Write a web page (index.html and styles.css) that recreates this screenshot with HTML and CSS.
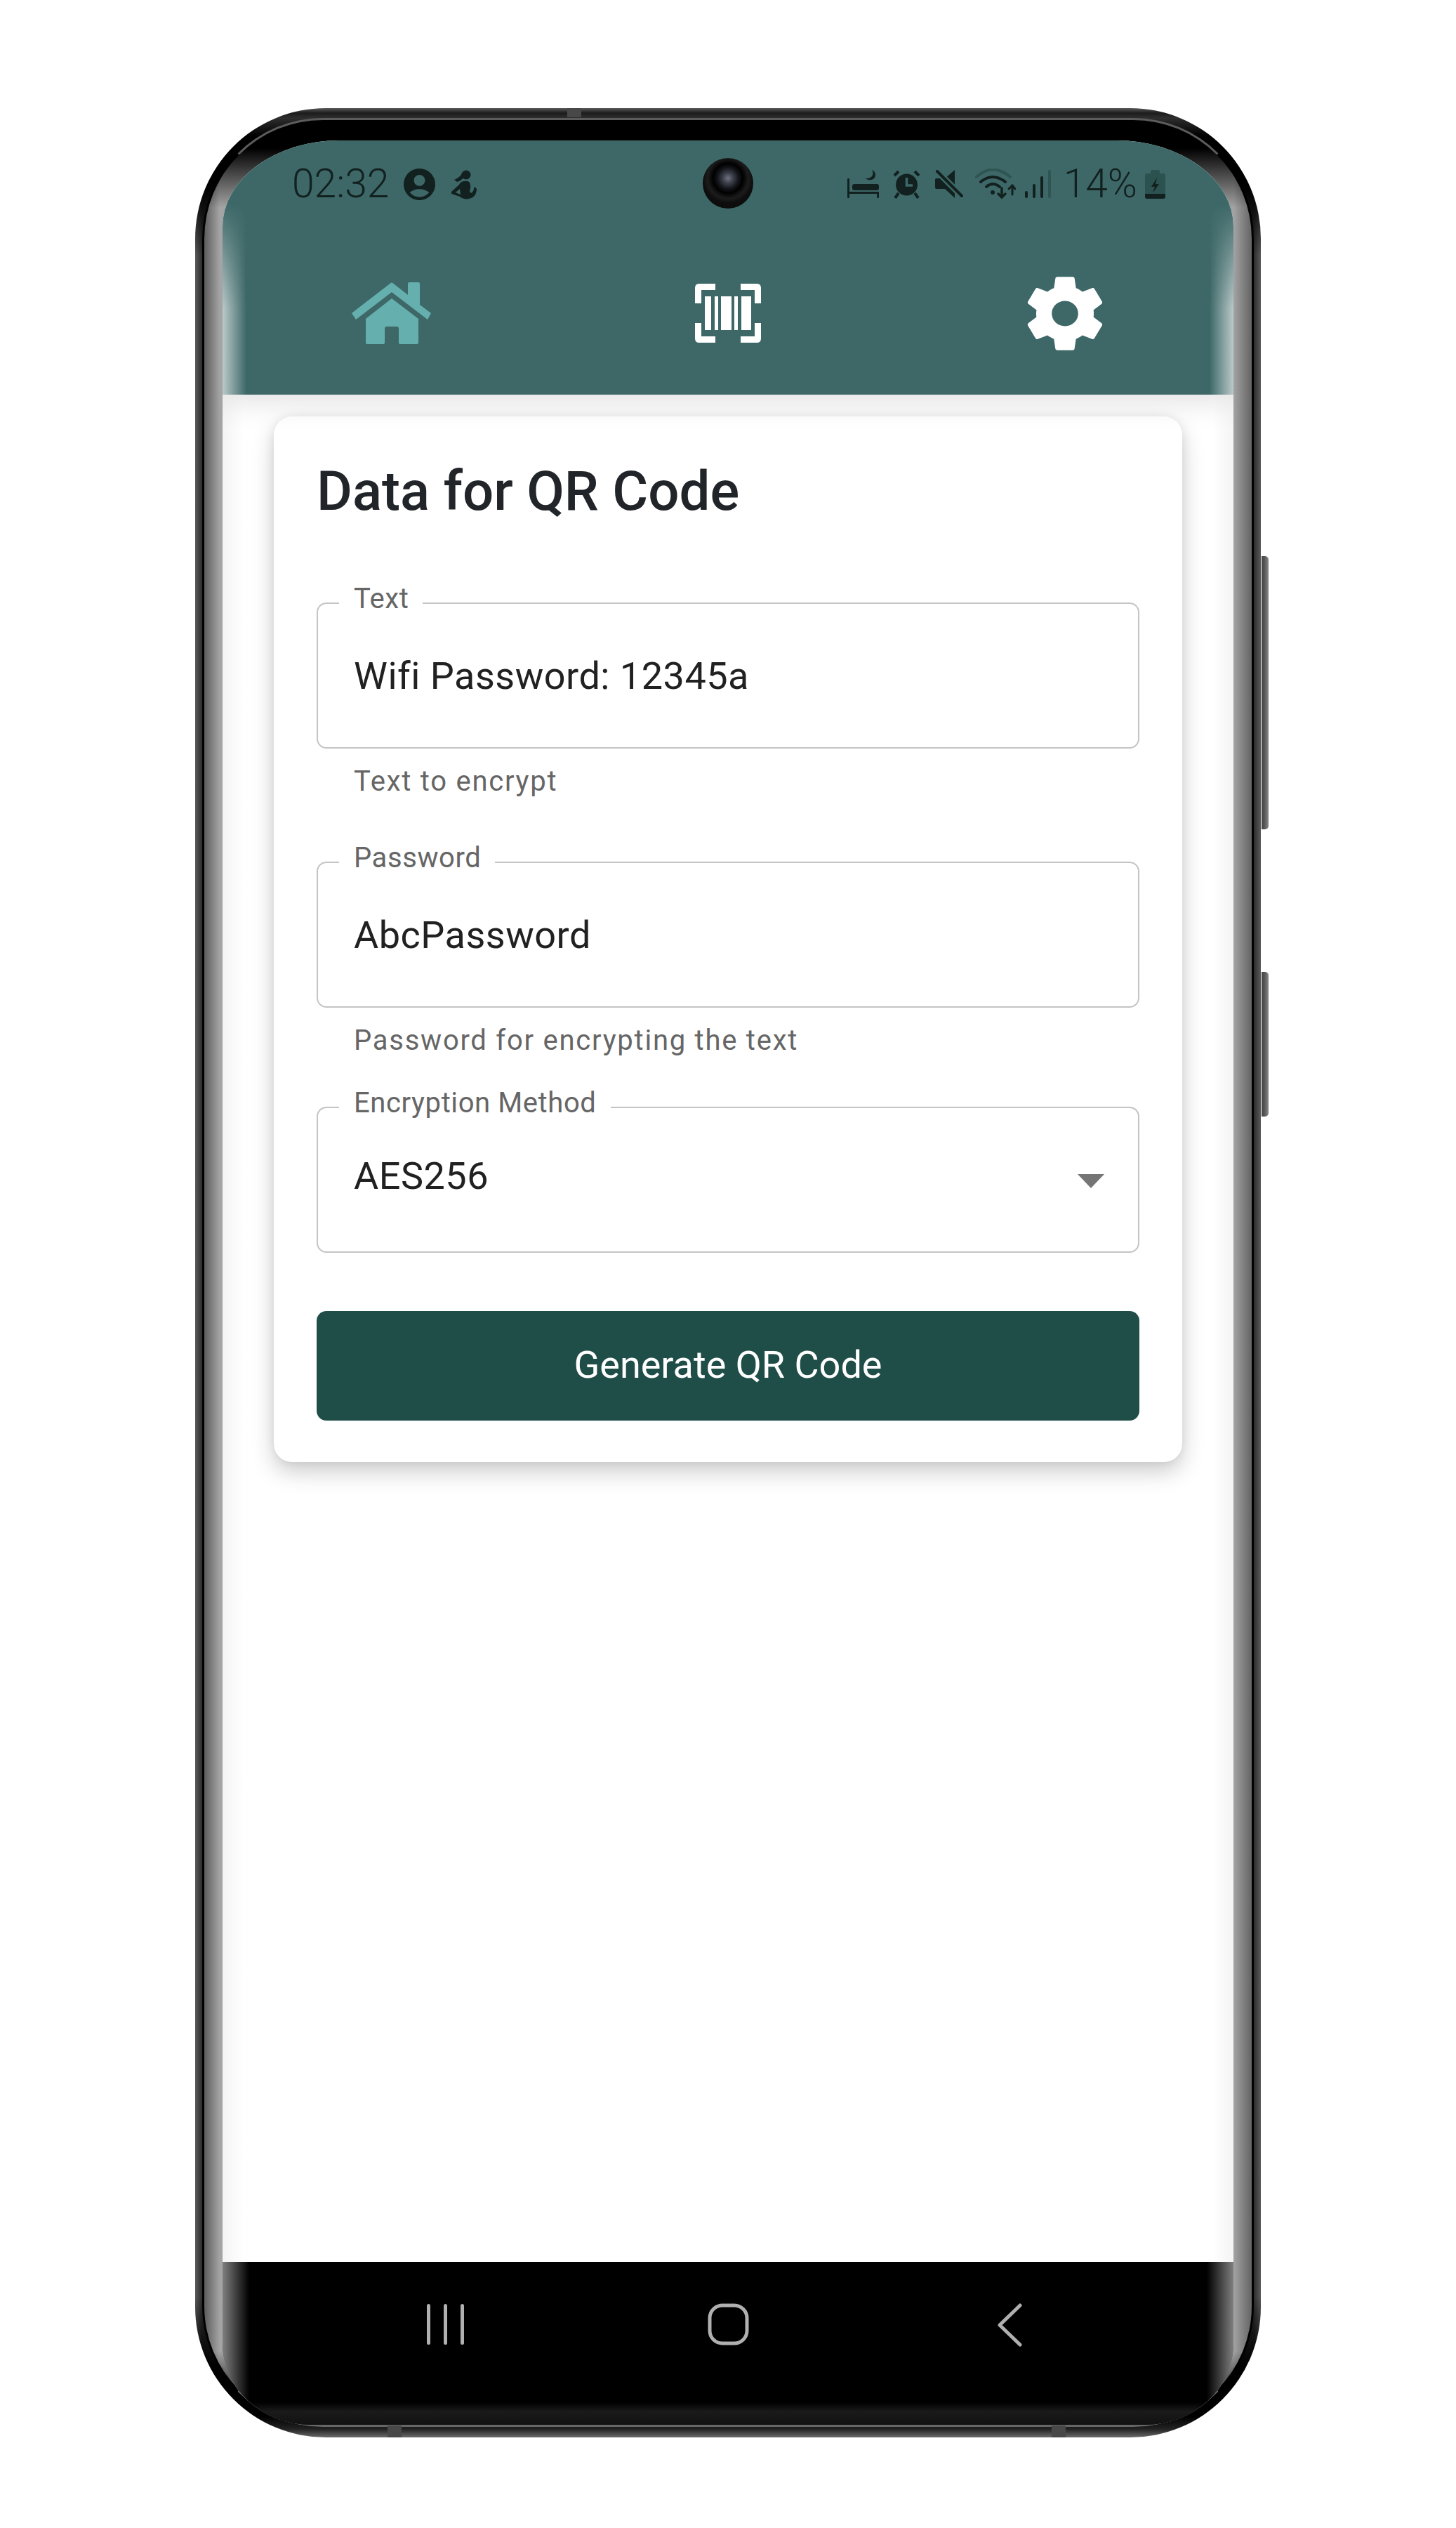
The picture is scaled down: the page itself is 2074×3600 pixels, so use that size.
FILE: index.html
```html
<!DOCTYPE html>
<html>
<head>
	<title>Data for QR Code</title>
	<meta charset="utf-8">
	<link rel="stylesheet" href="styles.css">
</head>

<body>
	<div class="phone">
		<div class="side-btn power"></div>
		<div class="side-btn volume"></div>
		<div class="notch notch-top"></div>
		<div class="notch notch-bottom-left"></div>
		<div class="notch notch-bottom-right"></div>

		<div class="bezel">
			<div class="screen">
				<div class="camera"></div>

				<header class="appbar">
					<div class="statusbar">
						<div class="status-left">
							<span class="status-text">02:32</span>
							<svg class="ic-profile" width="45" height="45" viewBox="2 2 20 20"><path fill="#12211f" d="M12 2C6.48 2 2 6.48 2 12s4.48 10 10 10 10-4.48 10-10S17.52 2 12 2zm0 4c1.93 0 3.5 1.57 3.5 3.5S13.93 13 12 13s-3.5-1.57-3.5-3.5S10.07 6 12 6zm0 14c-2.03 0-4.43-.82-6.14-2.88C7.55 15.8 9.68 15 12 15s4.45.8 6.14 2.12C16.43 19.18 14.03 20 12 20z"/></svg>
							<svg class="ic-run" width="37" height="43" viewBox="8 5 37 43">
								<circle cx="30" cy="13" r="6.5" fill="#12211f"/>
								<path fill="#12211f" d="M24 11C22 15 18 18 13 20L17 23C21 22 25 19 26 17Z"/>
								<path fill="#12211f" fill-rule="evenodd" d="M22 24C26 21 33 21 35 24C37 28 36 33 35 36C36 40 38 40 41 34C41 32 41 31 42 30L45 33C45 39 42 46 34 47C30 48 24 47 21 44L9 40V37L20 27ZM21 33L15 38L22 41Z"/>
							</svg>
						</div>
						<div class="status-right">
							<svg width="45" height="41" viewBox="1210 243 45 41" fill="#12211f">
								<rect x="1210" y="255" width="3" height="28" rx="1"/>
								<rect x="1217" y="263" width="38" height="9" rx="3"/>
								<rect x="1213" y="274" width="42" height="3"/>
								<rect x="1252" y="274" width="3" height="9" rx="1"/>
								<path d="M1245 243C1249 250 1244 256 1236 255C1240 259 1250 258 1250 250C1250 247 1248 244 1245 243Z"/>
							</svg>
							<svg class="ic-alarm" width="39" height="41" viewBox="0 0 39 41">
								<circle cx="19.5" cy="21" r="15.5" fill="#12211f"/>
								<path d="M19.5 11V22H28" fill="none" stroke="#3e6868" stroke-width="3.5"/>
								<path d="M2 8L8 2M31 2L37 8M8 33L3 40M31 33L36 40" stroke="#12211f" stroke-width="4" fill="none"/>
							</svg>
							<svg class="ic-mute" width="40" height="41" viewBox="1335 243 40 41">
								<path fill="#12211f" d="M1363 243V283L1349 270H1337Q1335 270 1335 268V257Q1335 255 1337 255H1349Z"/>
								<path d="M1334 241L1376 283" stroke="#3e6868" stroke-width="9"/>
								<path d="M1338 245L1373 280" stroke="#12211f" stroke-width="4" stroke-linecap="round"/>
							</svg>
							<svg class="ic-wifi" width="58" height="44" viewBox="1392 240 58 44" fill="none" stroke-width="4" stroke-linecap="round">
								<path d="M1394 252Q1417 231 1442 252" stroke="#2f5553"/>
								<path d="M1400 259Q1417 245 1435 259" stroke="#12211f"/>
								<path d="M1408 266Q1417 258 1427 266" stroke="#12211f"/>
								<circle cx="1417" cy="274" r="3" fill="#12211f" stroke="none"/>
								<path d="M1430 268V281M1425 276L1430 281L1435 276" stroke="#12211f" stroke-width="3.5"/>
								<path d="M1445 265V277M1440 269L1445 264L1449 269" stroke="#12211f" stroke-width="3"/>
							</svg>
							<svg class="ic-signal" width="37" height="40" viewBox="1463 243 37 40">
								<rect x="1463" y="273" width="4" height="10" rx="2" fill="#12211f"/>
								<rect x="1474" y="263" width="4" height="20" rx="2" fill="#12211f"/>
								<rect x="1485" y="252" width="4" height="31" rx="2" fill="#12211f"/>
								<rect x="1496" y="243" width="4" height="40" rx="2" fill="#2f5553"/>
							</svg>
							<span class="status-text pct">14%</span>
							<svg class="ic-battery" width="29" height="41" viewBox="1631 242 29 41">
								<rect x="1639" y="242" width="13" height="8" rx="2" fill="#2c5250"/>
								<rect x="1631" y="247" width="29" height="36" rx="3" fill="#2c5250"/>
								<path d="M1631 276H1660V280Q1660 283 1657 283H1634Q1631 283 1631 280Z" fill="#12211f"/>
								<path d="M1648 253L1640 266H1645L1642 275L1651 262H1646Z" fill="#12211f"/>
							</svg>
						</div>
					</div>

					<nav class="tabs">
						<div class="tab">
							<svg width="113" height="88" viewBox="0 0 113 88"><path fill="#66afaf" d="M55 1.5Q57 -.5 59 1.5L80 18V2Q80 0 82 0H95Q97 0 97 2V32L113 44L108 53L57 14L6 53L0 44Z"/><path fill="#66afaf" d="M57 23L95 52V86Q95 88 93 88H69Q67 88 67 86V66Q67 63 64 63H50Q47 63 47 66V86Q47 88 45 88H22Q20 88 20 86V52Z"/></svg>
						</div>
						<div class="tab">
							<svg width="94" height="84" viewBox="0 0 94 84" fill="#fff">
								<path d="M0 28V6Q0 0 6 0H29V9H9V28Z"/>
								<path d="M94 28V6Q94 0 88 0H65V9H85V28Z"/>
								<path d="M0 56V78Q0 84 6 84H29V75H9V56Z"/>
								<path d="M94 56V78Q94 84 88 84H65V75H85V56Z"/>
								<rect x="14" y="18" width="9" height="48"/>
								<rect x="28" y="18" width="5" height="48"/>
								<rect x="37" y="18" width="15" height="48"/>
								<rect x="56" y="18" width="5" height="48"/>
								<rect x="66" y="18" width="14" height="48"/>
							</svg>
						</div>
						<div class="tab">
							<svg width="106" height="109" viewBox="2.7 2 18.6 20" preserveAspectRatio="none"><path fill="#fff" d="M19.14 12.94c.04-.3.06-.61.06-.94 0-.32-.02-.64-.07-.94l2.03-1.58c.18-.14.23-.41.12-.61l-1.92-3.32c-.12-.22-.37-.29-.59-.22l-2.39.96c-.5-.38-1.03-.7-1.62-.94l-.36-2.54c-.04-.24-.24-.41-.48-.41h-3.84c-.24 0-.43.17-.47.41l-.36 2.54c-.59.24-1.13.57-1.62.94l-2.39-.96c-.22-.08-.47 0-.59.22L2.74 8.87c-.12.21-.08.47.12.61l2.03 1.58c-.05.3-.09.63-.09.94s.02.64.07.94l-2.03 1.58c-.18.14-.23.41-.12.61l1.92 3.32c.12.22.37.29.59.22l2.39-.96c.5.38 1.03.7 1.62.94l.36 2.54c.05.24.24.41.48.41h3.84c.24 0 .44-.17.47-.41l.36-2.54c.59-.24 1.13-.56 1.62-.94l2.39.96c.22.08.47 0 .59-.22l1.92-3.32c.12-.22.07-.47-.12-.61l-2.01-1.58zM12 15.3c-1.82 0-3.3-1.48-3.3-3.3s1.48-3.3 3.3-3.3 3.3 1.48 3.3 3.3-1.48 3.3-3.3 3.3z"/></svg>
						</div>
					</nav>
				</header>

				<main class="content">
					<section class="card">
						<h1 class="card-title">Data for QR Code</h1>

						<fieldset class="field">
							<legend>Text</legend>
							<div class="field-row">Wifi Password: 12345a</div>
						</fieldset>
						<p class="helper">Text to encrypt</p>

						<fieldset class="field field-next">
							<legend>Password</legend>
							<div class="field-row">AbcPassword</div>
						</fieldset>
						<p class="helper">Password for encrypting the text</p>

						<fieldset class="field field-select">
							<legend>Encryption Method</legend>
							<div class="field-row">
								<span>AES256</span>
								<span class="arrow"></span>
							</div>
						</fieldset>

						<button class="generate">Generate QR Code</button>
					</section>
				</main>

				<footer class="navbar">
					<svg width="54" height="60" viewBox="0 0 54 60" fill="#b0b0b0">
						<rect x="0" y="1" width="5" height="58" rx="2.5"/>
						<rect x="24" y="1" width="5" height="58" rx="2.5"/>
						<rect x="48" y="1" width="5" height="58" rx="2.5"/>
					</svg>
					<svg width="59" height="60" viewBox="0 0 59 60"><rect x="3" y="3" width="53" height="54" rx="18" fill="none" stroke="#b0b0b0" stroke-width="5"/></svg>
					<svg width="36" height="62" viewBox="0 0 36 62"><path d="M32 3L3 31L32 59" fill="none" stroke="#b0b0b0" stroke-width="5" stroke-linecap="round" stroke-linejoin="round"/></svg>
				</footer>
			</div>
		</div>
	</div>
</body>
</html>
```

FILE: styles.css
```css
body{
	margin: 0;
	height: 3600px;
	background: #fff;
	font-family: 'Roboto', sans-serif;
}

/* phone frame */
.phone{
	position: relative;
	box-sizing: border-box;
	width: 1518px;
	height: 3317px;
	margin: 154px 0 0 278px;
	padding: 14px 10px 15px;
	display: flex;
	border-radius: 186px;
	background:
		linear-gradient(to bottom, #5a5a5a, #1c1c1c 7px, #2e2e2e 14px, #000 40px, #000 110px, transparent 210px),
		linear-gradient(to top, #6a6a6a, #222 12px, #000 30px, #000 100px, transparent 200px),
		linear-gradient(to right, #5a5a5a, #2c2c2c 10px, #2c2c2c calc(100% - 10px), #5a5a5a);
}

.bezel{
	flex: 1;
	display: flex;
	box-sizing: border-box;
	padding: 29px 26px 0;
	border: 3px solid #000;
	border-top-color: #5c5c5c;
	border-bottom-color: #666;
	border-radius: 172px;
	background:
		linear-gradient(to bottom, #000 40px, transparent 125px),
		linear-gradient(to top, #0c0c0c 30px, transparent 105px),
		linear-gradient(to right, #5c5c5c, #a4a4a4 22px, #a4a4a4 calc(100% - 26px), #646464);
}

.screen{
	flex: 1;
	position: relative;
	display: flex;
	flex-direction: column;
	overflow: hidden;
	background: #fff;
	border-radius: 167px 167px 125px 125px / 123px 123px 115px 115px;
}

.side-btn{
	position: absolute;
	left: 1519px;
	width: 10px;
	border-radius: 0 5px 5px 0;
	background: linear-gradient(to right, #444, #555 40%, #888);
}

.power{
	top: 638px;
	height: 389px;
}

.volume{
	top: 1230px;
	height: 206px;
}

.notch{
	position: absolute;
	width: 20px;
	background: #484848;
}

.notch-top{
	top: 0;
	left: 530px;
	height: 13px;
}

.notch-bottom-left{
	bottom: 0;
	left: 274px;
	height: 17px;
}

.notch-bottom-right{
	bottom: 0;
	left: 1220px;
	height: 17px;
}

.camera{
	position: absolute;
	z-index: 3;
	top: 25px;
	left: 684px;
	width: 72px;
	height: 72px;
	border-radius: 50%;
	background: radial-gradient(circle at 50% 40%, #6f7480 0, #3e424c 7px, #13151a 15px, #000 21px, #1c1c1c 29px, #0d0d0d 36px);
}

/* app bar */
.appbar{
	position: relative;
	z-index: 2;
	box-sizing: border-box;
	height: 362px;
	padding-top: 40px;
	background: #3e6868;
	box-shadow: 0 10px 40px rgba(0,0,0,.12);
}

/* glass edge where the screen curves over */
.appbar::before{
	content: "";
	position: absolute;
	inset: 0;
	background: linear-gradient(to right, rgba(255,255,255,.65), rgba(255,255,255,0) 34px, rgba(255,255,255,0) calc(100% - 34px), rgba(255,255,255,.65));
	-webkit-mask-image: linear-gradient(to bottom, transparent 90px, #000 240px);
	mask-image: linear-gradient(to bottom, transparent 90px, #000 240px);
}

.statusbar{
	position: relative;
	display: flex;
	justify-content: space-between;
	height: 44px;
	padding: 0 97px 0 99px;
	align-items: center;
}

.status-left, .status-right{
	display: flex;
	align-items: center;
}

.status-text{
	font-size: 57px;
	font-weight: 300;
	line-height: 44px;
	color: #12211f;
}

.ic-profile{
	margin-left: 21px;
}

.ic-run{
	margin-left: 22px;
}

.ic-alarm{
	margin-left: 20px;
}

.ic-mute{
	margin-left: 21px;
}

.ic-wifi{
	margin-left: 17px;
}

.ic-signal{
	margin-left: 13px;
}

.pct{
	margin-left: 18px;
}

.ic-battery{
	margin-left: 11px;
}

.tabs{
	position: relative;
	display: grid;
	grid-template-columns: repeat(3, 480px);
	height: 232px;
	margin-top: 46px;
}

.tab{
	display: flex;
	align-items: center;
	justify-content: center;
}

/* main content */
.content{
	flex: 1;
	padding: 31px 73px 0;
	background: linear-gradient(to right, #f4f4f4, #fff 30px, #fff calc(100% - 30px), #f4f4f4);
}

.card{
	box-sizing: border-box;
	height: 1489px;
	padding: 65px 61px 60px;
	background: #fff;
	border-radius: 26px;
	box-shadow: 0 14px 32px rgba(0,0,0,.2), 0 0 14px rgba(0,0,0,.07);
}

.card-title{
	margin: 0 0 95px;
	font-size: 78px;
	font-weight: 500;
	line-height: 84px;
	color: #212529;
}

.field{
	box-sizing: border-box;
	height: 229px;
	min-width: 0;
	margin: 0;
	padding: 49px 0 0;
	border: 2.5px solid #c4c4c4;
	border-radius: 14px;
}

.field legend{
	margin-left: 30px;
	padding: 0 20px 12px 21px;
	font-size: 40px;
	line-height: 32px;
	letter-spacing: .6px;
	color: #666;
}

.field-row{
	display: flex;
	align-items: center;
	justify-content: space-between;
	padding: 0 48px 0 51px;
	font-size: 54px;
	line-height: 66px;
	letter-spacing: .5px;
	color: #212121;
}

.field-next{
	margin-top: 69px;
}

.field-select{
	margin-top: 49px;
	padding-top: 43px;
}

.arrow{
	width: 0;
	height: 0;
	margin-top: 14px;
	border-left: 19px solid transparent;
	border-right: 19px solid transparent;
	border-top: 20px solid #757575;
}

.helper{
	margin: 23px 0 0 53px;
	font-size: 40px;
	line-height: 48px;
	letter-spacing: 1.75px;
	color: #666;
}

.generate{
	display: block;
	width: 100%;
	height: 156px;
	margin-top: 83px;
	padding-bottom: 4px;
	border: none;
	border-radius: 14px;
	background: #1f4d47;
	color: #fff;
	font-family: 'Roboto', sans-serif;
	font-size: 54px;
	font-weight: 400;
}

/* bottom navigation */
.navbar{
	display: grid;
	grid-template-columns: repeat(3, 402px);
	justify-content: center;
	justify-items: center;
	box-sizing: border-box;
	height: 232px;
	padding-top: 59px;
	background:
		linear-gradient(to bottom, rgba(26,26,26,0) 200px, #1a1a1a 213px, #111 232px),
		linear-gradient(to right, rgba(150,150,150,.85), rgba(0,0,0,0) 38px, rgba(0,0,0,0) calc(100% - 38px), rgba(150,150,150,.85)),
		#000;
}
```
